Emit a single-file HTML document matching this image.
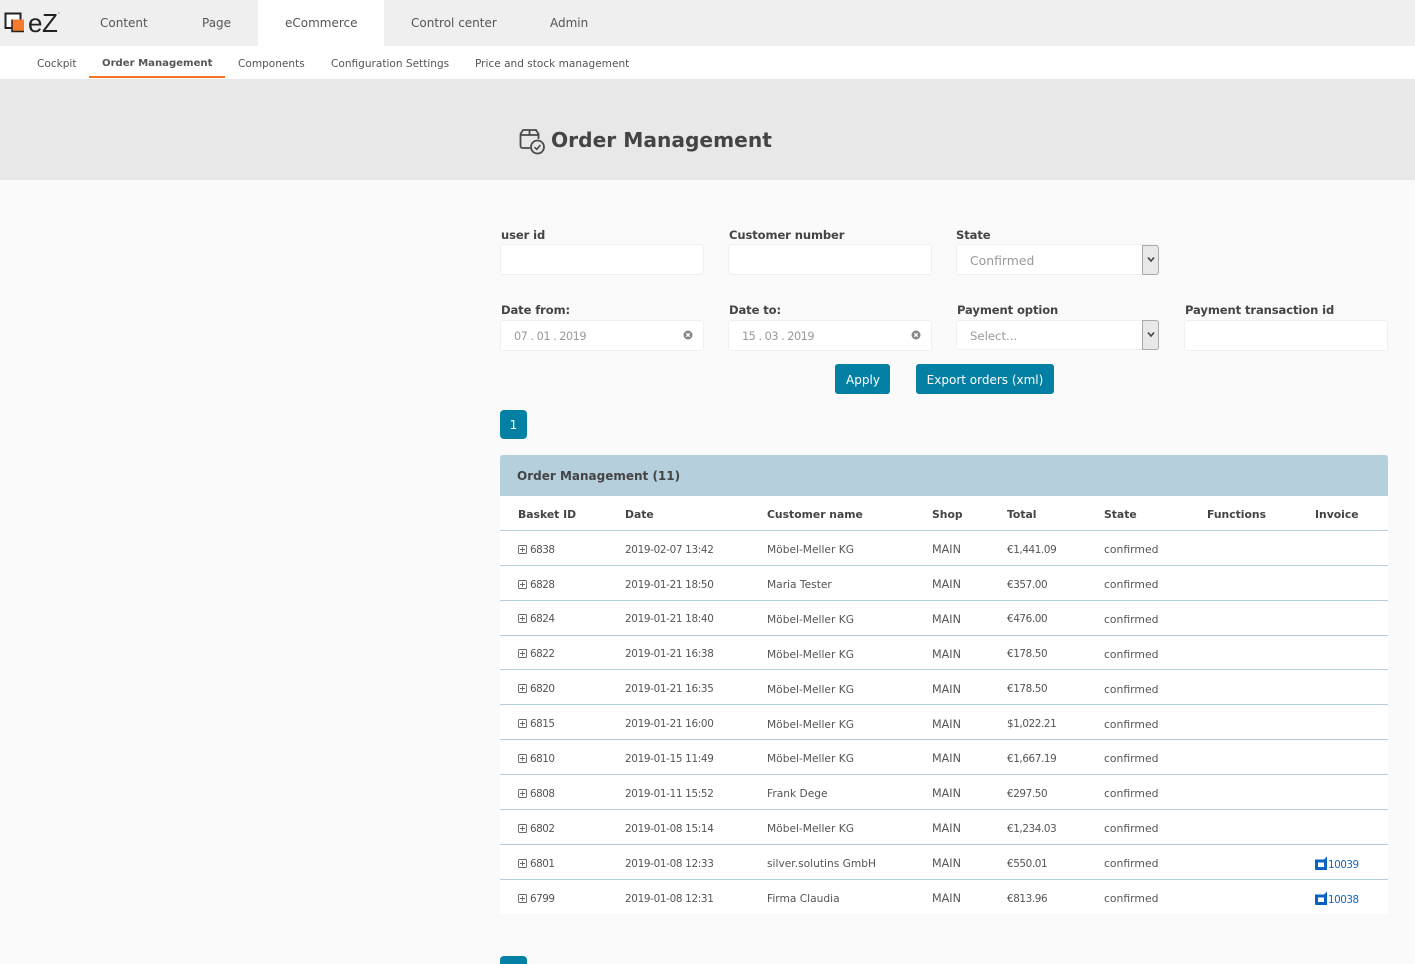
<!DOCTYPE html>
<html lang="en">
<head>
<meta charset="utf-8">
<title>Order Management</title>
<style>
html,body{margin:0;padding:0;width:1415px;height:964px;overflow:hidden;}
body{position:relative;background:#fafafa;font-family:"DejaVu Sans","Liberation Sans",sans-serif;color:#444;}
.a{position:absolute;white-space:nowrap;}
.top{left:0;top:0;width:1415px;height:46px;background:#efefef;}
.sub{left:0;top:46px;width:1415px;height:33px;background:#fff;}
.hero{left:0;top:79px;width:1415px;height:101px;background:#e9e8e9;}
.nav{top:15px;font-size:12px;line-height:17px;color:#555;}
.sn{top:57px;font-size:10.550px;line-height:14px;color:#555;}
.lab{font-size:11.550px;line-height:16px;font-weight:bold;color:#444;letter-spacing:-.1px;}
.inp{box-sizing:border-box;background:#fff;border:1px solid #f0f0f0;border-radius:3px;height:31px;width:204px;}
.ph{font-size:11.700px;line-height:16px;color:#999;}
.arrow{box-sizing:border-box;width:17px;height:30px;background:#e8e8e8;border:1px solid #aaa;border-radius:0 3px 3px 0;}
.btn{background:#0580a5;color:#fff;border-radius:3px;text-align:center;font-size:12px;line-height:32px;height:30px;}
table{position:absolute;left:500px;top:496px;width:888px;border-collapse:collapse;table-layout:fixed;background:#fff;font-size:10.400px;color:#555;}
th{height:34.400px;padding:3px 0 0 18px;text-align:left;font-size:10.800px;font-weight:bold;color:#444;border-bottom:1px solid #b5d0dc;box-sizing:border-box;}
td{height:34.900px;padding:3.600px 0 0 18px;box-sizing:border-box;border-bottom:1px solid #b5d0dc;white-space:nowrap;}
tr:last-child td{border-bottom:0;}
td:nth-child(1){letter-spacing:-.5px;}
td:nth-child(2){letter-spacing:-.32px;}
td:nth-child(3){font-size:10.650px;}
td:nth-child(4){font-size:11.200px;}
td:nth-child(5){letter-spacing:-.4px;}
td:nth-child(6){font-size:10.800px;}
.plus{display:inline-block;vertical-align:-1px;margin-right:3px;}
.lnk{color:#1565c0;letter-spacing:-.5px;margin-left:1px;}
.inv{display:inline-block;vertical-align:-2px;}
</style>
</head>
<body>
<div class="a top"></div>
<div class="a sub"></div>
<div class="a hero"></div>
<div class="a" style="left:258px;top:0;width:126px;height:46px;background:#fff;"></div>

<svg class="a" style="left:4px;top:12px;" width="24" height="24" viewBox="0 0 24 24">
<rect x="1.500" y="1.500" width="15" height="14.500" fill="#fff" stroke="#222" stroke-width="2"/>
<rect x="8" y="7.500" width="12" height="12" fill="#f97a2a"/>
<path d="M8 7.500V19.500H20" fill="none" stroke="#222" stroke-width="1.500"/>
</svg>
<div class="a" style="left:28px;top:8px;font-family:'Liberation Sans',sans-serif;font-size:26px;line-height:30px;color:#222;letter-spacing:-.5px;">eZ</div>
<div class="a" style="left:58px;top:12px;width:2px;height:2px;border-radius:50%;background:#bbb;"></div>

<div class="a nav" style="left:100px;">Content</div>
<div class="a nav" style="left:202px;">Page</div>
<div class="a nav" style="left:285px;">eCommerce</div>
<div class="a nav" style="left:411px;">Control center</div>
<div class="a nav" style="left:550px;">Admin</div>

<div class="a sn" style="left:37px;">Cockpit</div>
<div class="a sn" style="left:102px;font-weight:bold;font-size:10.100px;">Order Management</div>
<div class="a" style="left:89px;top:76px;width:136px;height:2px;background:#f47421;"></div>
<div class="a sn" style="left:238px;">Components</div>
<div class="a sn" style="left:331px;">Configuration Settings</div>
<div class="a sn" style="left:475px;">Price and stock management</div>

<svg class="a" style="left:519px;top:128px;" width="27" height="27" viewBox="0 0 27 27" fill="none" stroke="#4a4a4a" stroke-width="1.800">
<path d="M11 20H3.500A2 2 0 0 1 1.500 18V6L4 2H17L19.500 6V11"/>
<path d="M1.500 7H19.500M10.500 2V7"/>
<circle cx="18.500" cy="19" r="6.500"/>
<path d="M15.500 19.200L17.800 21.300L21.500 17" stroke-width="1.600"/>
</svg>
<div class="a" style="left:551px;top:125px;font-size:20.200px;line-height:30px;font-weight:bold;color:#444;">Order Management</div>

<div class="a lab" style="left:501px;top:227px;">user id</div>
<div class="a lab" style="left:729px;top:227px;">Customer number</div>
<div class="a lab" style="left:956px;top:227px;">State</div>
<div class="a inp" style="left:500px;top:244px;"></div>
<div class="a inp" style="left:728px;top:244px;"></div>
<div class="a inp" style="left:956px;top:244px;width:203px;"></div>
<div class="a ph" style="left:970px;top:253px;font-size:12.400px;">Confirmed</div>
<div class="a arrow" style="left:1142px;top:245px;"></div>
<svg class="a" style="left:1147px;top:256px;" width="8" height="7" viewBox="0 0 8 7"><path d="M1 1.500L4 5L7 1.500" fill="none" stroke="#444" stroke-width="1.600"/></svg>

<div class="a lab" style="left:501px;top:302px;">Date from:</div>
<div class="a lab" style="left:729px;top:302px;">Date to:</div>
<div class="a lab" style="left:957px;top:302px;">Payment option</div>
<div class="a lab" style="left:1185px;top:302px;">Payment transaction id</div>
<div class="a inp" style="left:500px;top:320px;"></div>
<div class="a inp" style="left:728px;top:320px;"></div>
<div class="a inp" style="left:956px;top:320px;width:203px;height:30px;"></div>
<div class="a inp" style="left:1184px;top:320px;"></div>
<div class="a ph" style="left:514px;top:329px;font-size:11.300px;letter-spacing:-.5px;">07 . 01 . 2019</div>
<div class="a ph" style="left:742px;top:329px;font-size:11.300px;letter-spacing:-.5px;">15 . 03 . 2019</div>
<div class="a ph" style="left:970px;top:328px;">Select...</div>
<div class="a arrow" style="left:1142px;top:320px;"></div>
<svg class="a" style="left:1147px;top:331px;" width="8" height="7" viewBox="0 0 8 7"><path d="M1 1.500L4 5L7 1.500" fill="none" stroke="#444" stroke-width="1.600"/></svg>
<svg class="a" style="left:683px;top:330px;" width="10" height="10" viewBox="0 0 10 10"><circle cx="5" cy="5" r="4.500" fill="#888"/><path d="M3.300 3.300L6.700 6.700M6.700 3.300L3.300 6.700" stroke="#fff" stroke-width="1.300"/></svg>
<svg class="a" style="left:911px;top:330px;" width="10" height="10" viewBox="0 0 10 10"><circle cx="5" cy="5" r="4.500" fill="#888"/><path d="M3.300 3.300L6.700 6.700M6.700 3.300L3.300 6.700" stroke="#fff" stroke-width="1.300"/></svg>

<div class="a btn" style="left:835px;top:364px;width:55px;text-indent:1px;">Apply</div>
<div class="a btn" style="left:916px;top:364px;width:138px;">Export orders (xml)</div>
<div class="a btn" style="left:500px;top:410px;width:27px;height:29px;line-height:31px;border-radius:4px;">1</div>

<div class="a" style="left:500px;top:455px;width:888px;height:41px;background:#b5d0dc;border-radius:3px 3px 0 0;"></div>
<div class="a" style="left:517px;top:467px;font-size:12px;line-height:18px;font-weight:bold;color:#444;">Order Management (11)</div>

<table>
<colgroup><col style="width:107px"><col style="width:142px"><col style="width:165px"><col style="width:75px"><col style="width:97px"><col style="width:103px"><col style="width:108px"><col style="width:91px"></colgroup>
<tr><th>Basket ID</th><th>Date</th><th>Customer name</th><th>Shop</th><th>Total</th><th>State</th><th>Functions</th><th>Invoice</th></tr>
<tr><td><svg class="plus" width="9" height="9" viewBox="0 0 9 9" fill="none" stroke="#666" stroke-width=".9"><rect x=".5" y=".5" width="8" height="8" rx="1"/><path d="M2 4.500H7M4.500 2V7"/></svg>6838</td><td>2019-02-07 13:42</td><td>Möbel-Meller KG</td><td>MAIN</td><td>€1,441.09</td><td>confirmed</td><td></td><td></td></tr>
<tr><td><svg class="plus" width="9" height="9" viewBox="0 0 9 9" fill="none" stroke="#666" stroke-width=".9"><rect x=".5" y=".5" width="8" height="8" rx="1"/><path d="M2 4.500H7M4.500 2V7"/></svg>6828</td><td>2019-01-21 18:50</td><td>Maria Tester</td><td>MAIN</td><td>€357.00</td><td>confirmed</td><td></td><td></td></tr>
<tr><td><svg class="plus" width="9" height="9" viewBox="0 0 9 9" fill="none" stroke="#666" stroke-width=".9"><rect x=".5" y=".5" width="8" height="8" rx="1"/><path d="M2 4.500H7M4.500 2V7"/></svg>6824</td><td>2019-01-21 18:40</td><td>Möbel-Meller KG</td><td>MAIN</td><td>€476.00</td><td>confirmed</td><td></td><td></td></tr>
<tr><td><svg class="plus" width="9" height="9" viewBox="0 0 9 9" fill="none" stroke="#666" stroke-width=".9"><rect x=".5" y=".5" width="8" height="8" rx="1"/><path d="M2 4.500H7M4.500 2V7"/></svg>6822</td><td>2019-01-21 16:38</td><td>Möbel-Meller KG</td><td>MAIN</td><td>€178.50</td><td>confirmed</td><td></td><td></td></tr>
<tr><td><svg class="plus" width="9" height="9" viewBox="0 0 9 9" fill="none" stroke="#666" stroke-width=".9"><rect x=".5" y=".5" width="8" height="8" rx="1"/><path d="M2 4.500H7M4.500 2V7"/></svg>6820</td><td>2019-01-21 16:35</td><td>Möbel-Meller KG</td><td>MAIN</td><td>€178.50</td><td>confirmed</td><td></td><td></td></tr>
<tr><td><svg class="plus" width="9" height="9" viewBox="0 0 9 9" fill="none" stroke="#666" stroke-width=".9"><rect x=".5" y=".5" width="8" height="8" rx="1"/><path d="M2 4.500H7M4.500 2V7"/></svg>6815</td><td>2019-01-21 16:00</td><td>Möbel-Meller KG</td><td>MAIN</td><td>$1,022.21</td><td>confirmed</td><td></td><td></td></tr>
<tr><td><svg class="plus" width="9" height="9" viewBox="0 0 9 9" fill="none" stroke="#666" stroke-width=".9"><rect x=".5" y=".5" width="8" height="8" rx="1"/><path d="M2 4.500H7M4.500 2V7"/></svg>6810</td><td>2019-01-15 11:49</td><td>Möbel-Meller KG</td><td>MAIN</td><td>€1,667.19</td><td>confirmed</td><td></td><td></td></tr>
<tr><td><svg class="plus" width="9" height="9" viewBox="0 0 9 9" fill="none" stroke="#666" stroke-width=".9"><rect x=".5" y=".5" width="8" height="8" rx="1"/><path d="M2 4.500H7M4.500 2V7"/></svg>6808</td><td>2019-01-11 15:52</td><td>Frank Dege</td><td>MAIN</td><td>€297.50</td><td>confirmed</td><td></td><td></td></tr>
<tr><td><svg class="plus" width="9" height="9" viewBox="0 0 9 9" fill="none" stroke="#666" stroke-width=".9"><rect x=".5" y=".5" width="8" height="8" rx="1"/><path d="M2 4.500H7M4.500 2V7"/></svg>6802</td><td>2019-01-08 15:14</td><td>Möbel-Meller KG</td><td>MAIN</td><td>€1,234.03</td><td>confirmed</td><td></td><td></td></tr>
<tr><td><svg class="plus" width="9" height="9" viewBox="0 0 9 9" fill="none" stroke="#666" stroke-width=".9"><rect x=".5" y=".5" width="8" height="8" rx="1"/><path d="M2 4.500H7M4.500 2V7"/></svg>6801</td><td>2019-01-08 12:33</td><td>silver.solutins GmbH</td><td>MAIN</td><td>€550.01</td><td>confirmed</td><td></td><td><svg class="inv" width="12" height="14" viewBox="0 0 12 14"><path fill="#0b63c0" fill-rule="evenodd" d="M0 3.500H9L12 .5V14H1Q0 14 0 13ZM3 6.500V11H9V6.500Z"/></svg><span class="lnk">10039</span></td></tr>
<tr><td><svg class="plus" width="9" height="9" viewBox="0 0 9 9" fill="none" stroke="#666" stroke-width=".9"><rect x=".5" y=".5" width="8" height="8" rx="1"/><path d="M2 4.500H7M4.500 2V7"/></svg>6799</td><td>2019-01-08 12:31</td><td>Firma Claudia</td><td>MAIN</td><td>€813.96</td><td>confirmed</td><td></td><td><svg class="inv" width="12" height="14" viewBox="0 0 12 14"><path fill="#0b63c0" fill-rule="evenodd" d="M0 3.500H9L12 .5V14H1Q0 14 0 13ZM3 6.500V11H9V6.500Z"/></svg><span class="lnk">10038</span></td></tr>
</table>

<div class="a" style="left:500px;top:956px;width:27px;height:8px;background:#0580a5;border-radius:4px 4px 0 0;"></div>
</body>
</html>
